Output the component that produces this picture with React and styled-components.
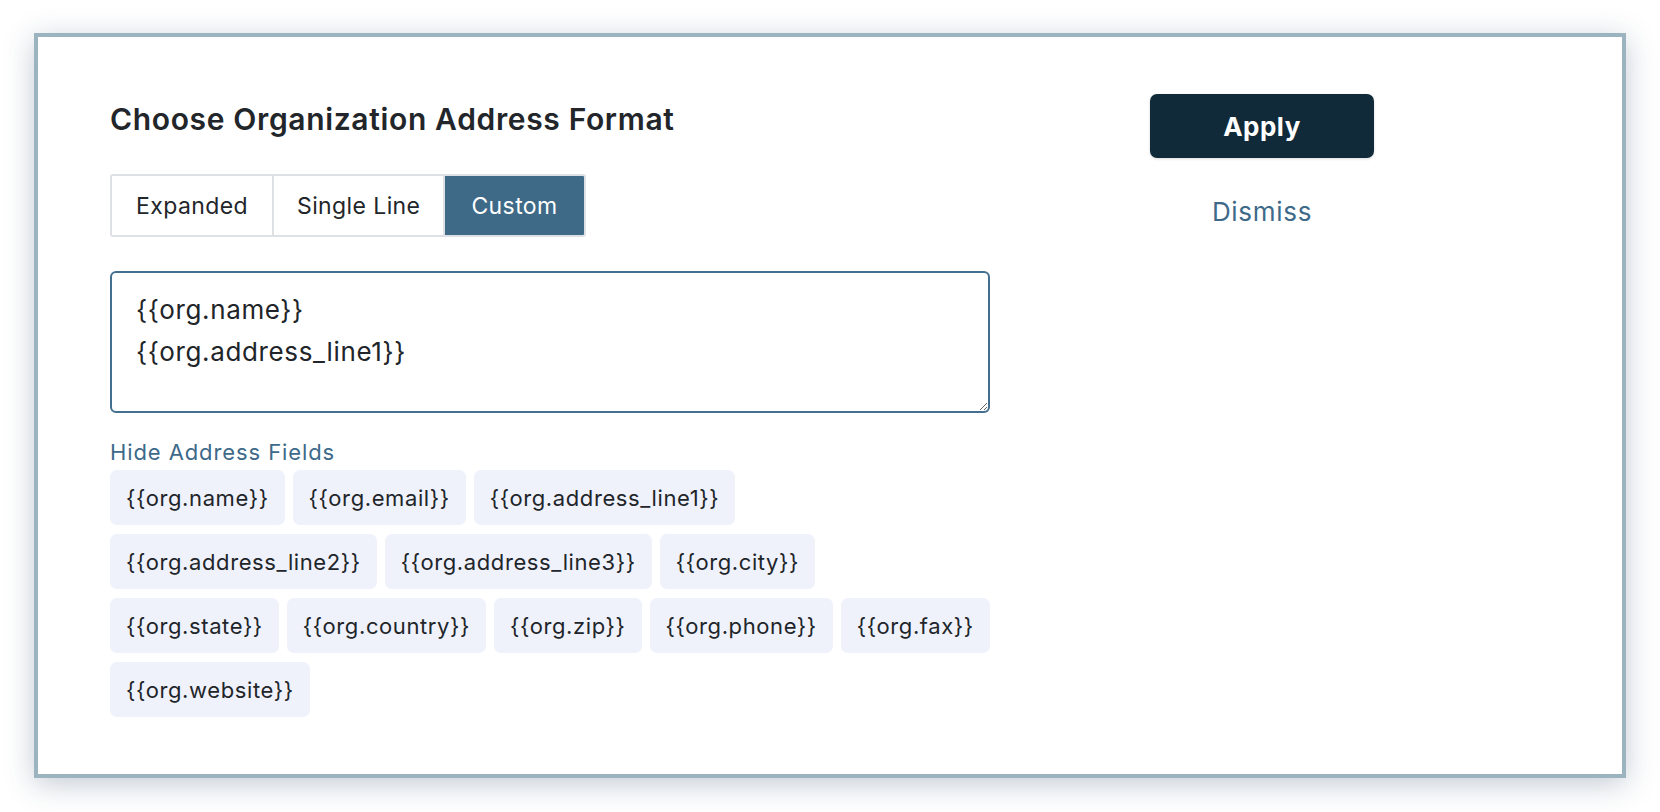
import React, { useState } from "react";
import styled, { createGlobalStyle } from "styled-components";

const Global = createGlobalStyle`
  html, body { margin: 0; padding: 0; background: #ffffff; }
  body { font-family: Inter, "Noto Sans", "Liberation Sans", sans-serif; color: #212529; }
  * { box-sizing: border-box; }
`;

const Page = styled.div`
  padding: 33px 0 0 34px;
  width: 1660px;
  height: 812px;
`;

const Panel = styled.section`
  width: 1592px;
  height: 745px;
  border: 4px solid #9cb3c0;
  background: #ffffff;
  box-shadow: 0 6px 28px rgba(40, 70, 100, 0.28);
  padding: 57px 0 0 72px;
  display: grid;
  grid-template-columns: 880px 224px;
  column-gap: 160px;
  align-items: start;
`;

const Main = styled.div`
  display: flex;
  flex-direction: column;
  align-items: flex-start;
`;

const Title = styled.h2`
  margin: 0;
  font-size: 30px;
  line-height: 50px;
  font-weight: 600;
  color: #22262a;
  letter-spacing: 0.65px;
  white-space: nowrap;
`;

const Segmented = styled.div`
  display: flex;
  margin-top: 30px;
  height: 63px;
  border: 2px solid #dde1e6;
  border-radius: 3px;
  overflow: hidden;
`;

const Segment = styled.button`
  height: 100%;
  padding: 0 ${(p) => p.$pad}px;
  border: none;
  border-left: ${(p) => (p.$first ? "none" : "2px solid #dde1e6")};
  background: ${(p) => (p.$active ? "#3e6987" : "#ffffff")};
  color: ${(p) => (p.$active ? "#ffffff" : "#22262a")};
  font-family: inherit;
  font-size: 23px;
  letter-spacing: 0.4px;
  font-weight: 400;
  cursor: pointer;
`;

const Area = styled.textarea`
  margin-top: 34px;
  width: 880px;
  height: 142px;
  border: 2px solid #44708f;
  border-radius: 6px;
  padding: 16px 24px;
  font-family: inherit;
  font-size: 26px;
  letter-spacing: 0.65px;
  line-height: 42px;
  color: #212529;
  resize: vertical;
  outline: none;
`;

const LinkText = styled.a`
  margin-top: 24px;
  font-size: 22px;
  letter-spacing: 0.9px;
  line-height: 30px;
  color: #3e6a8a;
  text-decoration: none;
  cursor: pointer;
`;

const Chips = styled.div`
  margin-top: 3px;
  width: 880px;
  display: flex;
  flex-direction: column;
  row-gap: 9px;
`;

const ChipRow = styled.div`
  display: flex;
  column-gap: 8px;
`;

const Chip = styled.button`
  height: 55px;
  padding: 0 16px;
  border: none;
  border-radius: 7px;
  background: #eff2fb;
  color: #212529;
  font-family: inherit;
  font-size: 22px;
  letter-spacing: 0.6px;
  white-space: nowrap;
  cursor: pointer;
`;

const Side = styled.div`
  display: flex;
  flex-direction: column;
  align-items: stretch;
`;

const Apply = styled.button`
  height: 64px;
  border: none;
  border-radius: 7px;
  background: #112a3a;
  color: #ffffff;
  font-family: inherit;
  font-size: 26px;
  letter-spacing: 0.5px;
  font-weight: 700;
  box-shadow: 0 1px 3px rgba(0, 0, 0, 0.15);
  cursor: pointer;
`;

const Dismiss = styled.button`
  margin-top: 38px;
  border: none;
  background: none;
  color: #3e6a8a;
  font-family: inherit;
  font-size: 26px;
  letter-spacing: 0.7px;
  line-height: 30px;
  cursor: pointer;
`;

const FIELD_ROWS = [
  ["name", "email", "address_line1"],
  ["address_line2", "address_line3", "city"],
  ["state", "country", "zip", "phone", "fax"],
  ["website"],
];

const SEGMENTS = [
  { label: "Expanded", pad: 24 },
  { label: "Single Line", pad: 23 },
  { label: "Custom", pad: 26 },
];

export default function App() {
  const [mode, setMode] = useState("Custom");
  const [value, setValue] = useState("{{org.name}}\n{{org.address_line1}}");
  return (
    <Page>
      <Global />
      <Panel>
        <Main>
          <Title>Choose Organization Address Format</Title>
          <Segmented>
            {SEGMENTS.map((s, i) => (
              <Segment
                key={s.label}
                $first={i === 0}
                $pad={s.pad}
                $active={mode === s.label}
                onClick={() => setMode(s.label)}
              >
                {s.label}
              </Segment>
            ))}
          </Segmented>
          <Area value={value} onChange={(e) => setValue(e.target.value)} />
          <LinkText>Hide Address Fields</LinkText>
          <Chips>
            {FIELD_ROWS.map((row, i) => (
              <ChipRow key={i}>
                {row.map((f) => (
                  <Chip key={f}>{`{{org.${f}}}`}</Chip>
                ))}
              </ChipRow>
            ))}
          </Chips>
        </Main>
        <Side>
          <Apply>Apply</Apply>
          <Dismiss>Dismiss</Dismiss>
        </Side>
      </Panel>
    </Page>
  );
}
